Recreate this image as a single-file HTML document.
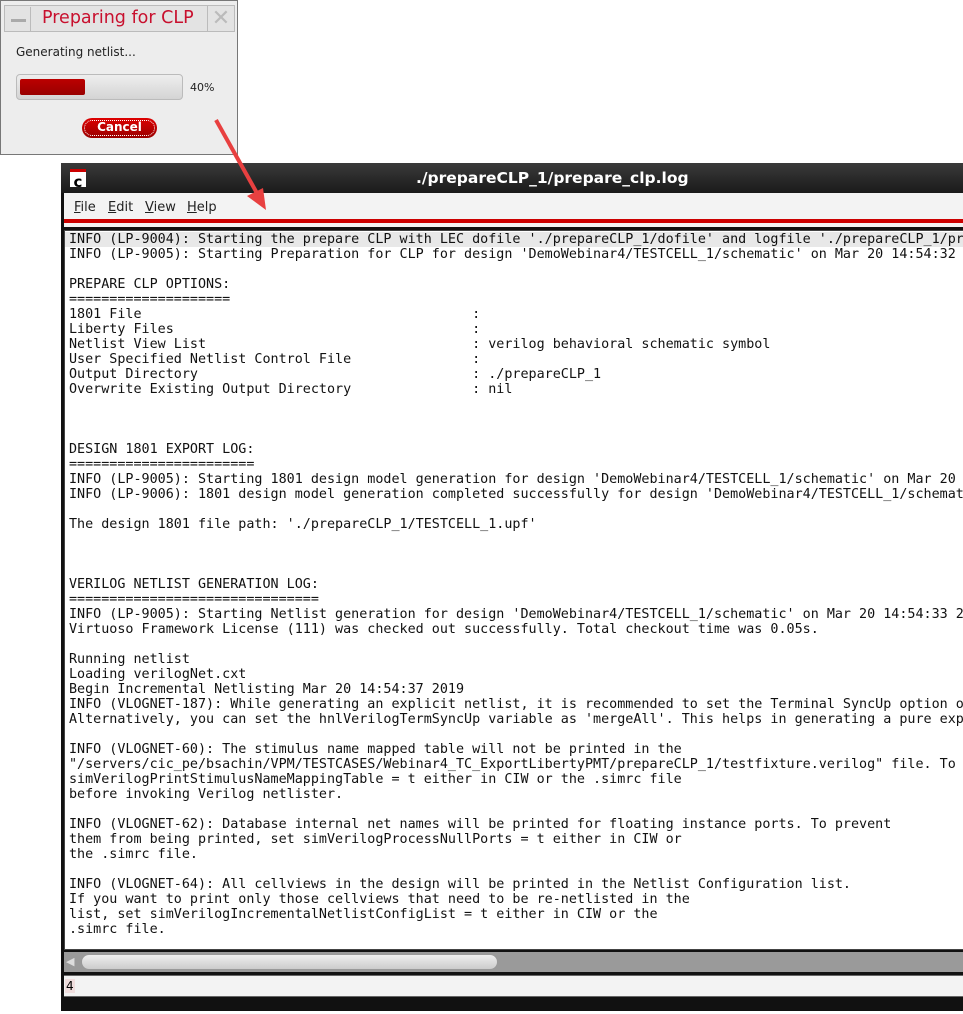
<!DOCTYPE html>
<html><head><style>
*{margin:0;padding:0;box-sizing:border-box}
body{width:963px;height:1014px;background:#fff;position:relative;overflow:hidden;font-family:"DejaVu Sans","Liberation Sans",sans-serif}
.dlg{position:absolute;left:0;top:0;width:238px;height:155px;background:#ededed;border:1px solid #777}
.dt{position:absolute;left:3px;top:4px;width:231px;height:27px;background:#e3e3e3;border:1px solid #bbb}
.min{position:absolute;left:1px;top:1px;width:25px;height:24px;border-right:1px solid #bbb}
.min:after{content:"";position:absolute;left:5px;top:12px;width:15px;height:3px;background:#aaa}
.ttl{position:absolute;left:37px;top:2px;font-size:17.5px;color:#c8102e;font-family:"DejaVu Sans",sans-serif;white-space:nowrap}
.cls{position:absolute;right:0;top:0;width:27px;height:25px;border-left:1px solid #bbb;color:#bbb;font-size:22px;text-align:center;line-height:25px;background:#e3e3e3}
.gen{position:absolute;left:15px;top:44px;font-size:12px;color:#222}
.bar{position:absolute;left:15px;top:73px;width:167px;height:26px;border:1px solid #bbb;border-radius:4px;background:linear-gradient(#eee,#d4d4d4);}
.fill{position:absolute;left:3px;top:4px;width:65px;height:16px;background:linear-gradient(#b00,#900);border-radius:2px}
.pct{position:absolute;left:189px;top:80px;font-size:11px;color:#222}
.btn{position:absolute;left:81px;top:117px;width:75px;height:20px;border-radius:10px;background:linear-gradient(#d00,#900);color:#fff;font-weight:bold;font-size:12px;text-align:center;line-height:19px;outline:1px dotted #fff;outline-offset:-3px}
.win{position:absolute;left:61px;top:163px;width:910px;height:848px;background:#111;}
.tb{position:absolute;left:0;top:0;width:100%;height:30px;background:linear-gradient(#3a3a3a,#1a1a1a);}
.tb .t{position:absolute;left:355px;top:6px;color:#fff;font-weight:bold;font-size:15.5px}
.ico{position:absolute;left:9px;top:6px;width:16px;height:18px;background:#fff;color:#000;font-weight:bold;font-size:15px;line-height:20px;text-align:center;border-top:3px solid #c00}
.mb{position:absolute;left:3px;top:30px;width:100%;height:34px;background:#f3f3f3}
.mb span{position:absolute;top:7px;font-size:13px;color:#222}
.mb u{text-decoration:underline}
.red{position:absolute;left:0;top:26px;width:100%;height:4px;background:#c00}
.txt{position:absolute;left:3px;top:67px;width:100%;height:720px;background:#fff;border:1px solid #444;overflow:hidden}
pre{font-family:"DejaVu Sans Mono","Liberation Mono",monospace;font-size:13.4px;line-height:15px;color:#111;position:absolute;left:4px;top:1px;white-space:pre}
.hl{position:absolute;left:0;top:1px;width:100%;height:15px;background:#e8e8e8}
.sb{position:absolute;left:3px;top:789px;width:100%;height:20px;background:#9a9a9a}
.sb .th{position:absolute;left:17px;top:2px;width:417px;height:16px;border-radius:8px;background:linear-gradient(#eee,#ccc);border:1px solid #999}
.sb .ar{position:absolute;left:2px;top:3px;color:#ddd;font-size:11px}
.st{position:absolute;left:3px;top:812px;width:100%;height:22px;background:#f3f3f3;border-top:1px solid #666;border-bottom:1px solid #666}
.st span{position:absolute;left:1px;top:3px;font-size:12px;background:#f0dede;padding:0 1px}
.arrow{position:absolute;left:0;top:0}
</style></head><body>
<div class="dlg">
<div class="dt"><div class="min"></div><div class="ttl">Preparing for CLP</div><div class="cls">✕</div></div>
<div class="gen">Generating netlist...</div>
<div class="bar"><div class="fill"></div></div>
<div class="pct">40%</div>
<div class="btn">Cancel</div>
</div>
<div class="win">
<div class="tb"><div class="ico">c</div><div class="t">./prepareCLP_1/prepare_clp.log</div></div>
<div class="mb"><span style="left:10px"><u>F</u>ile</span><span style="left:44px"><u>E</u>dit</span><span style="left:81px"><u>V</u>iew</span><span style="left:123px"><u>H</u>elp</span><div class="red"></div></div>
<div class="txt"><div class="hl"></div><pre>INFO (LP-9004): Starting the prepare CLP with LEC dofile './prepareCLP_1/dofile' and logfile './prepareCLP_1/pr
INFO (LP-9005): Starting Preparation for CLP for design 'DemoWebinar4/TESTCELL_1/schematic' on Mar 20 14:54:32

PREPARE CLP OPTIONS:
====================
1801 File                                         :
Liberty Files                                     :
Netlist View List                                 : verilog behavioral schematic symbol
User Specified Netlist Control File               :
Output Directory                                  : ./prepareCLP_1
Overwrite Existing Output Directory               : nil



DESIGN 1801 EXPORT LOG:
=======================
INFO (LP-9005): Starting 1801 design model generation for design 'DemoWebinar4/TESTCELL_1/schematic' on Mar 20
INFO (LP-9006): 1801 design model generation completed successfully for design 'DemoWebinar4/TESTCELL_1/schemat

The design 1801 file path: './prepareCLP_1/TESTCELL_1.upf'



VERILOG NETLIST GENERATION LOG:
===============================
INFO (LP-9005): Starting Netlist generation for design 'DemoWebinar4/TESTCELL_1/schematic' on Mar 20 14:54:33 2
Virtuoso Framework License (111) was checked out successfully. Total checkout time was 0.05s.

Running netlist
Loading verilogNet.cxt
Begin Incremental Netlisting Mar 20 14:54:37 2019
INFO (VLOGNET-187): While generating an explicit netlist, it is recommended to set the Terminal SyncUp option o
Alternatively, you can set the hnlVerilogTermSyncUp variable as 'mergeAll'. This helps in generating a pure exp

INFO (VLOGNET-60): The stimulus name mapped table will not be printed in the
"/servers/cic_pe/bsachin/VPM/TESTCASES/Webinar4_TC_ExportLibertyPMT/prepareCLP_1/testfixture.verilog" file. To
simVerilogPrintStimulusNameMappingTable = t either in CIW or the .simrc file
before invoking Verilog netlister.

INFO (VLOGNET-62): Database internal net names will be printed for floating instance ports. To prevent
them from being printed, set simVerilogProcessNullPorts = t either in CIW or
the .simrc file.

INFO (VLOGNET-64): All cellviews in the design will be printed in the Netlist Configuration list.
If you want to print only those cellviews that need to be re-netlisted in the
list, set simVerilogIncrementalNetlistConfigList = t either in CIW or the
.simrc file.

INFO (VLOGNET-63): The initial statement for the hnlVerilogIgnoreTermNameList will be printed</pre></div>
<div class="sb"><span class="ar">◀</span><div class="th"></div></div>
<div class="st"><span>4</span></div>
</div>
<svg class="arrow" width="963" height="1014"><line x1="216" y1="120" x2="258" y2="195" stroke="#e84040" stroke-width="4"/><polygon points="266,210 247,196 263,188" fill="#e84040"/></svg>
</body></html>
